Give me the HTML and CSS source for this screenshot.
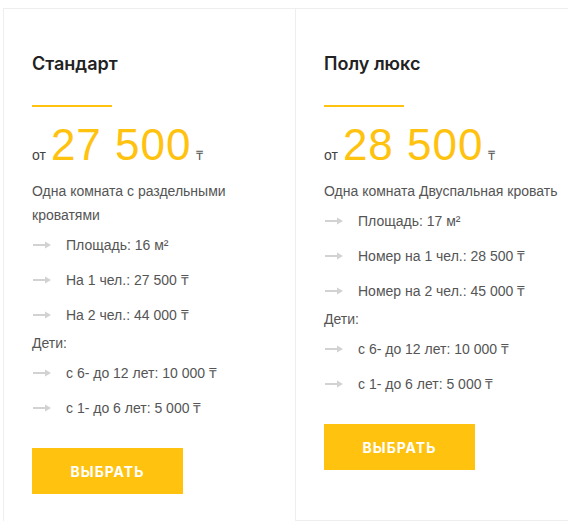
FILE: index.html
```html
<!DOCTYPE html>
<html lang="ru">
<head>
    <meta charset="UTF-8">
    <meta name="viewport" content="width=device-width, initial-scale=1.0">
    <title>Номера</title>
    <link rel="stylesheet" href="styles.css">
</head>
<body>
    <div class="rooms">
        <div class="room">
            <h3 class="room-title">Стандарт</h3>
            <div class="room-line"></div>
            <div class="price">
                <span class="price-from">от</span>
                <span class="price-value">27 500</span>
                <span class="price-cur">₸</span>
            </div>
            <p class="room-desc">Одна комната с раздельными кроватями</p>
            <ul class="room-list">
                <li><svg class="arrow" width="18" height="8" viewBox="0 0 18 8"><path d="M0 4h13" stroke="#d2d2d2" stroke-width="2"/><path d="M12 0.5 18 4 12 7.5z" fill="#d2d2d2"/></svg>Площадь: 16 м²</li>
                <li><svg class="arrow" width="18" height="8" viewBox="0 0 18 8"><path d="M0 4h13" stroke="#d2d2d2" stroke-width="2"/><path d="M12 0.5 18 4 12 7.5z" fill="#d2d2d2"/></svg>На 1 чел.: 27 500 ₸</li>
                <li><svg class="arrow" width="18" height="8" viewBox="0 0 18 8"><path d="M0 4h13" stroke="#d2d2d2" stroke-width="2"/><path d="M12 0.5 18 4 12 7.5z" fill="#d2d2d2"/></svg>На 2 чел.: 44 000 ₸</li>
            </ul>
            <div class="room-sub">Дети:</div>
            <ul class="room-list">
                <li><svg class="arrow" width="18" height="8" viewBox="0 0 18 8"><path d="M0 4h13" stroke="#d2d2d2" stroke-width="2"/><path d="M12 0.5 18 4 12 7.5z" fill="#d2d2d2"/></svg>с 6- до 12 лет: 10 000 ₸</li>
                <li><svg class="arrow" width="18" height="8" viewBox="0 0 18 8"><path d="M0 4h13" stroke="#d2d2d2" stroke-width="2"/><path d="M12 0.5 18 4 12 7.5z" fill="#d2d2d2"/></svg>с 1- до 6 лет: 5 000 ₸</li>
            </ul>
            <button class="room-btn">Выбрать</button>
        </div>

        <div class="room">
            <h3 class="room-title">Полу люкс</h3>
            <div class="room-line"></div>
            <div class="price">
                <span class="price-from">от</span>
                <span class="price-value">28 500</span>
                <span class="price-cur">₸</span>
            </div>
            <p class="room-desc">Одна комната Двуспальная кровать</p>
            <ul class="room-list">
                <li><svg class="arrow" width="18" height="8" viewBox="0 0 18 8"><path d="M0 4h13" stroke="#d2d2d2" stroke-width="2"/><path d="M12 0.5 18 4 12 7.5z" fill="#d2d2d2"/></svg>Площадь: 17 м²</li>
                <li><svg class="arrow" width="18" height="8" viewBox="0 0 18 8"><path d="M0 4h13" stroke="#d2d2d2" stroke-width="2"/><path d="M12 0.5 18 4 12 7.5z" fill="#d2d2d2"/></svg>Номер на 1 чел.: 28 500 ₸</li>
                <li><svg class="arrow" width="18" height="8" viewBox="0 0 18 8"><path d="M0 4h13" stroke="#d2d2d2" stroke-width="2"/><path d="M12 0.5 18 4 12 7.5z" fill="#d2d2d2"/></svg>Номер на 2 чел.: 45 000 ₸</li>
            </ul>
            <div class="room-sub">Дети:</div>
            <ul class="room-list">
                <li><svg class="arrow" width="18" height="8" viewBox="0 0 18 8"><path d="M0 4h13" stroke="#d2d2d2" stroke-width="2"/><path d="M12 0.5 18 4 12 7.5z" fill="#d2d2d2"/></svg>с 6- до 12 лет: 10 000 ₸</li>
                <li><svg class="arrow" width="18" height="8" viewBox="0 0 18 8"><path d="M0 4h13" stroke="#d2d2d2" stroke-width="2"/><path d="M12 0.5 18 4 12 7.5z" fill="#d2d2d2"/></svg>с 1- до 6 лет: 5 000 ₸</li>
            </ul>
            <button class="room-btn">Выбрать</button>
        </div>
    </div>
</body>
</html>
```

FILE: styles.css
```css
body {
    margin: 0;
    padding: 0;
    background: #fff;
    font-family: "Liberation Sans", Arial, sans-serif;
    overflow: hidden;
}
.rooms {
    display: flex;
    align-items: flex-start;
    padding: 8px 0 0 3px;
}
.room {
    flex: 0 0 293px;
    box-sizing: border-box;
    border: 1px solid #eeeeee;
    padding: 43px 28px 50px;
}
.room + .room {
    margin-left: -1px;
}
.room-title {
    margin: 0;
    font-family: Inter, "Noto Sans", sans-serif;
    font-size: 18px;
    line-height: 24px;
    font-weight: 600;
    color: #222;
}
.room-line {
    width: 80px;
    height: 2px;
    margin-top: 29px;
    background: #ffc20e;
}
.price {
    display: flex;
    align-items: baseline;
    margin-top: 16px;
    white-space: nowrap;
}
.price-from {
    font-size: 14px;
    color: #444;
    margin-right: 5px;
}
.price-value {
    font-size: 44px;
    line-height: 44px;
    letter-spacing: 1px;
    color: #ffc20e;
}
.price-cur {
    font-size: 13px;
    color: #555;
    margin-left: 5px;
}
.room-desc {
    margin: 12px 0 0;
    font-size: 14px;
    line-height: 24px;
    color: #555;
}
.room-list {
    list-style: none;
    margin: 0;
    padding: 0;
}
.room-list li {
    display: flex;
    align-items: center;
    height: 35px;
    font-size: 14px;
    color: #555;
    white-space: nowrap;
}
.arrow {
    margin: 0 15px 0 1px;
    flex: none;
}
.room-sub {
    font-size: 14px;
    line-height: 23px;
    color: #555;
}
.room-btn {
    display: block;
    width: 151px;
    height: 46px;
    margin-top: 23px;
    border: 0;
    background: #ffc20e;
    color: #fff;
    font-family: Inter, "Noto Sans", sans-serif;
    font-size: 14px;
    font-weight: 700;
    letter-spacing: 1px;
    text-transform: uppercase;
    cursor: pointer;
}
```
